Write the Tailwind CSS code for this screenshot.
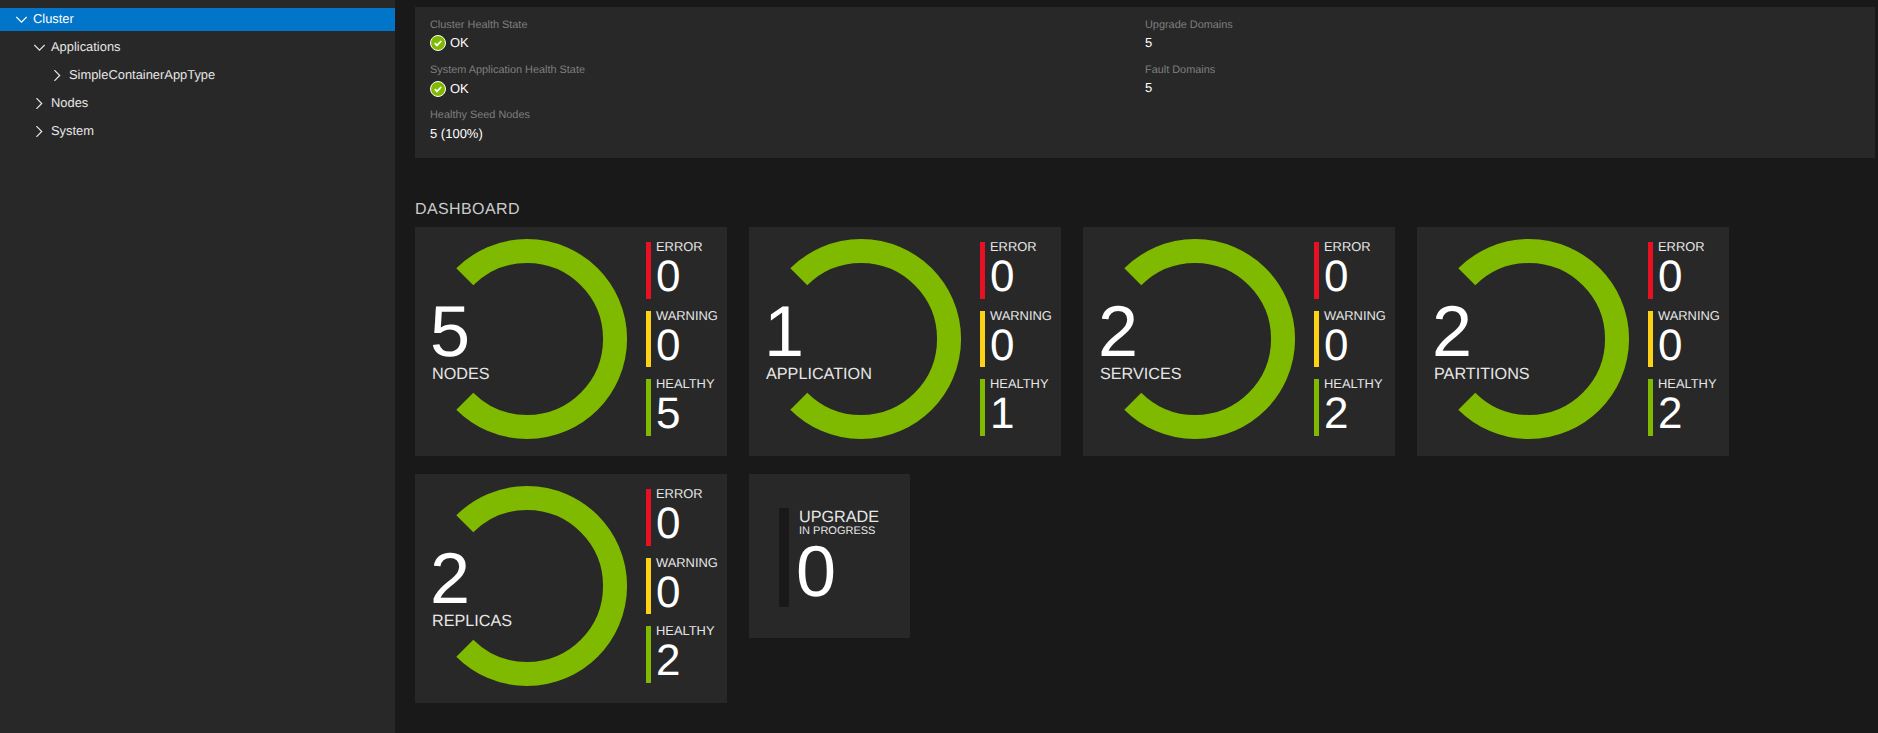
<!DOCTYPE html>
<html>
<head>
<meta charset="utf-8">
<script src="https://cdn.jsdelivr.net/npm/@tailwindcss/browser@4"></script>
</head>
<body class="bg-[#191919] overflow-hidden font-['Liberation_Sans',Arial,sans-serif] [text-rendering:geometricPrecision]">
<div class="flex w-[1878px] h-[733px]">
  <aside class="w-[395px] h-full bg-[#282828] pt-[8px] text-[12.9px] text-[#e6e6e6] shrink-0">
    <div class="h-[23px] bg-[#0075c9] text-white flex items-center pl-[16px] gap-[6px] mb-[5px]">
      <svg class="w-[11px] h-[11px]" viewBox="0 0 11 11" fill="none" stroke="currentColor" stroke-width="1.2"><path d="M.3 3l5.2 5.2L10.7 3"/></svg><span class="pb-[2px]">Cluster</span>
    </div>
    <div class="h-[23px] flex items-center pl-[34px] gap-[6px] mb-[5px]">
      <svg class="w-[11px] h-[11px]" viewBox="0 0 11 11" fill="none" stroke="currentColor" stroke-width="1.2"><path d="M.3 3l5.2 5.2L10.7 3"/></svg><span class="pb-[2px]">Applications</span>
    </div>
    <div class="h-[23px] flex items-center pl-[52px] gap-[6px] mb-[5px]">
      <svg class="w-[11px] h-[11px]" viewBox="0 0 11 11" fill="none" stroke="currentColor" stroke-width="1.2"><path d="M2.4.2l5.3 5.3-5.3 5.3"/></svg><span class="pb-[2px]">SimpleContainerAppType</span>
    </div>
    <div class="h-[23px] flex items-center pl-[34px] gap-[6px] mb-[5px]">
      <svg class="w-[11px] h-[11px]" viewBox="0 0 11 11" fill="none" stroke="currentColor" stroke-width="1.2"><path d="M2.4.2l5.3 5.3-5.3 5.3"/></svg><span class="pb-[2px]">Nodes</span>
    </div>
    <div class="h-[23px] flex items-center pl-[34px] gap-[6px]">
      <svg class="w-[11px] h-[11px]" viewBox="0 0 11 11" fill="none" stroke="currentColor" stroke-width="1.2"><path d="M2.4.2l5.3 5.3-5.3 5.3"/></svg><span class="pb-[2px]">System</span>
    </div>
  </aside>
  <main class="flex-1 pl-[20px] pr-[3px] pt-[7px]">
    <section class="h-[151px] bg-[#282828] px-[15px] pt-[11px] grid grid-cols-2">
      <div>
        <div class="text-[10.9px] leading-[14px] text-[#7f7f7f]">Cluster Health State</div>
        <div class="text-[13px] leading-[18px] mt-[2px] mb-[11px] text-white flex items-center gap-[4px]">
          <svg class="w-[16px] h-[16px]" viewBox="0 0 16 16"><circle cx="8" cy="8" r="7.5" fill="#7fba00" stroke="#fff" stroke-width="1"/><path d="M4.8 8.2l2.2 2.2 4.2-4.4" fill="none" stroke="#fff" stroke-width="1.8"/></svg><span>OK</span>
        </div>
        <div class="text-[10.9px] leading-[14px] text-[#7f7f7f]">System Application Health State</div>
        <div class="text-[13px] leading-[18px] mt-[3px] mb-[10px] text-white flex items-center gap-[4px]">
          <svg class="w-[16px] h-[16px]" viewBox="0 0 16 16"><circle cx="8" cy="8" r="7.5" fill="#7fba00" stroke="#fff" stroke-width="1"/><path d="M4.8 8.2l2.2 2.2 4.2-4.4" fill="none" stroke="#fff" stroke-width="1.8"/></svg><span>OK</span>
        </div>
        <div class="text-[10.9px] leading-[14px] text-[#7f7f7f]">Healthy Seed Nodes</div>
        <div class="text-[13px] leading-[18px] mt-[3px] text-white">5 (100%)</div>
      </div>
      <div>
        <div class="text-[10.9px] leading-[14px] text-[#7f7f7f]">Upgrade Domains</div>
        <div class="text-[13px] leading-[18px] mt-[2px] mb-[11px] text-white">5</div>
        <div class="text-[10.9px] leading-[14px] text-[#7f7f7f]">Fault Domains</div>
        <div class="text-[13px] leading-[18px] mt-[2px] text-white">5</div>
      </div>
    </section>
    <h2 class="mt-[42px] h-[27px] text-[16px] leading-[20px] tracking-[0.4px] text-[#cccccc]">DASHBOARD</h2>
    <div class="flex flex-col gap-[18px]">
      <div class="flex gap-[22px] items-start">

        <div class="relative w-[312px] h-[229px] bg-[#282828] flex">
          <svg class="w-[231px] h-[229px] shrink-0" viewBox="0 0 231 229"><path d="M49.8 49.8A88 88 0 1 1 49.8 174.2" fill="none" stroke="#7fba00" stroke-width="24"/></svg>
          <div class="absolute left-[15px] top-[75px] text-[72px] leading-[60px] text-white">5</div>
          <div class="absolute left-[17px] top-[137px] text-[16.2px] leading-[20px] text-[#e6e6e6]">NODES</div>
          <div class="pt-[15px]">
            <div class="h-[57px] border-l-[5px] border-[#e81123] pl-[5px] mb-[12px] flex flex-col"><div class="-mt-[3px] text-[12.9px] leading-[15px] text-[#e6e6e6]">ERROR</div><div class="text-[44px] leading-[46px] text-white">0</div></div>
            <div class="h-[56px] border-l-[5px] border-[#fcd116] pl-[5px] mb-[12px] flex flex-col"><div class="-mt-[3px] text-[12.9px] leading-[15px] text-[#e6e6e6]">WARNING</div><div class="text-[44px] leading-[46px] text-white">0</div></div>
            <div class="h-[57px] border-l-[5px] border-[#7fba00] pl-[5px] flex flex-col"><div class="-mt-[3px] text-[12.9px] leading-[15px] text-[#e6e6e6]">HEALTHY</div><div class="text-[44px] leading-[46px] text-white">5</div></div>
          </div>
        </div>

        <div class="relative w-[312px] h-[229px] bg-[#282828] flex">
          <svg class="w-[231px] h-[229px] shrink-0" viewBox="0 0 231 229"><path d="M49.8 49.8A88 88 0 1 1 49.8 174.2" fill="none" stroke="#7fba00" stroke-width="24"/></svg>
          <div class="absolute left-[15px] top-[75px] text-[72px] leading-[60px] text-white">1</div>
          <div class="absolute left-[17px] top-[137px] text-[16.2px] leading-[20px] text-[#e6e6e6]">APPLICATION</div>
          <div class="pt-[15px]">
            <div class="h-[57px] border-l-[5px] border-[#e81123] pl-[5px] mb-[12px] flex flex-col"><div class="-mt-[3px] text-[12.9px] leading-[15px] text-[#e6e6e6]">ERROR</div><div class="text-[44px] leading-[46px] text-white">0</div></div>
            <div class="h-[56px] border-l-[5px] border-[#fcd116] pl-[5px] mb-[12px] flex flex-col"><div class="-mt-[3px] text-[12.9px] leading-[15px] text-[#e6e6e6]">WARNING</div><div class="text-[44px] leading-[46px] text-white">0</div></div>
            <div class="h-[57px] border-l-[5px] border-[#7fba00] pl-[5px] flex flex-col"><div class="-mt-[3px] text-[12.9px] leading-[15px] text-[#e6e6e6]">HEALTHY</div><div class="text-[44px] leading-[46px] text-white">1</div></div>
          </div>
        </div>

        <div class="relative w-[312px] h-[229px] bg-[#282828] flex">
          <svg class="w-[231px] h-[229px] shrink-0" viewBox="0 0 231 229"><path d="M49.8 49.8A88 88 0 1 1 49.8 174.2" fill="none" stroke="#7fba00" stroke-width="24"/></svg>
          <div class="absolute left-[15px] top-[75px] text-[72px] leading-[60px] text-white">2</div>
          <div class="absolute left-[17px] top-[137px] text-[16.2px] leading-[20px] text-[#e6e6e6]">SERVICES</div>
          <div class="pt-[15px]">
            <div class="h-[57px] border-l-[5px] border-[#e81123] pl-[5px] mb-[12px] flex flex-col"><div class="-mt-[3px] text-[12.9px] leading-[15px] text-[#e6e6e6]">ERROR</div><div class="text-[44px] leading-[46px] text-white">0</div></div>
            <div class="h-[56px] border-l-[5px] border-[#fcd116] pl-[5px] mb-[12px] flex flex-col"><div class="-mt-[3px] text-[12.9px] leading-[15px] text-[#e6e6e6]">WARNING</div><div class="text-[44px] leading-[46px] text-white">0</div></div>
            <div class="h-[57px] border-l-[5px] border-[#7fba00] pl-[5px] flex flex-col"><div class="-mt-[3px] text-[12.9px] leading-[15px] text-[#e6e6e6]">HEALTHY</div><div class="text-[44px] leading-[46px] text-white">2</div></div>
          </div>
        </div>

        <div class="relative w-[312px] h-[229px] bg-[#282828] flex">
          <svg class="w-[231px] h-[229px] shrink-0" viewBox="0 0 231 229"><path d="M49.8 49.8A88 88 0 1 1 49.8 174.2" fill="none" stroke="#7fba00" stroke-width="24"/></svg>
          <div class="absolute left-[15px] top-[75px] text-[72px] leading-[60px] text-white">2</div>
          <div class="absolute left-[17px] top-[137px] text-[16.2px] leading-[20px] text-[#e6e6e6]">PARTITIONS</div>
          <div class="pt-[15px]">
            <div class="h-[57px] border-l-[5px] border-[#e81123] pl-[5px] mb-[12px] flex flex-col"><div class="-mt-[3px] text-[12.9px] leading-[15px] text-[#e6e6e6]">ERROR</div><div class="text-[44px] leading-[46px] text-white">0</div></div>
            <div class="h-[56px] border-l-[5px] border-[#fcd116] pl-[5px] mb-[12px] flex flex-col"><div class="-mt-[3px] text-[12.9px] leading-[15px] text-[#e6e6e6]">WARNING</div><div class="text-[44px] leading-[46px] text-white">0</div></div>
            <div class="h-[57px] border-l-[5px] border-[#7fba00] pl-[5px] flex flex-col"><div class="-mt-[3px] text-[12.9px] leading-[15px] text-[#e6e6e6]">HEALTHY</div><div class="text-[44px] leading-[46px] text-white">2</div></div>
          </div>
        </div>
      </div>

      <div class="flex gap-[22px] items-start">
        <div class="relative w-[312px] h-[229px] bg-[#282828] flex">
          <svg class="w-[231px] h-[229px] shrink-0" viewBox="0 0 231 229"><path d="M49.8 49.8A88 88 0 1 1 49.8 174.2" fill="none" stroke="#7fba00" stroke-width="24"/></svg>
          <div class="absolute left-[15px] top-[75px] text-[72px] leading-[60px] text-white">2</div>
          <div class="absolute left-[17px] top-[137px] text-[16.2px] leading-[20px] text-[#e6e6e6]">REPLICAS</div>
          <div class="pt-[15px]">
            <div class="h-[57px] border-l-[5px] border-[#e81123] pl-[5px] mb-[12px] flex flex-col"><div class="-mt-[3px] text-[12.9px] leading-[15px] text-[#e6e6e6]">ERROR</div><div class="text-[44px] leading-[46px] text-white">0</div></div>
            <div class="h-[56px] border-l-[5px] border-[#fcd116] pl-[5px] mb-[12px] flex flex-col"><div class="-mt-[3px] text-[12.9px] leading-[15px] text-[#e6e6e6]">WARNING</div><div class="text-[44px] leading-[46px] text-white">0</div></div>
            <div class="h-[57px] border-l-[5px] border-[#7fba00] pl-[5px] flex flex-col"><div class="-mt-[3px] text-[12.9px] leading-[15px] text-[#e6e6e6]">HEALTHY</div><div class="text-[44px] leading-[46px] text-white">2</div></div>
          </div>
        </div>

        <div class="w-[161px] h-[164px] bg-[#282828] pl-[30px] pt-[34px]">
          <div class="h-[99px] border-l-[10px] border-[#191919] pl-[10px] flex flex-col">
            <div class="text-[16.2px] leading-[18px] text-[#e6e6e6]">UPGRADE</div>
            <div class="text-[11px] leading-[11px] text-[#e6e6e6]">IN PROGRESS</div>
            <div class="text-[72px] leading-[70px] -ml-[3px] text-white">0</div>
          </div>
        </div>
      </div>
    </div>
  </main>
</div>
</body>
</html>
